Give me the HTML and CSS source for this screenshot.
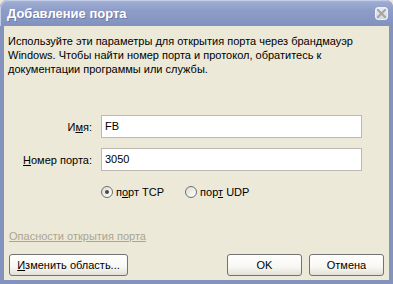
FILE: index.html
```html
<!DOCTYPE html>
<html lang="ru">
<head>
<meta charset="utf-8">
<title>Добавление порта</title>
<link rel="stylesheet" href="styles.css">
</head>
<body>
<div class="window">
  <div class="titlebar">
    <span class="title">Добавление порта</span>
    <span class="close" aria-label="Закрыть">
      <svg width="9" height="9" viewBox="0 0 9 9"><path d="M1 1 L8 8 M8 1 L1 8" stroke="#a7a49a" stroke-width="2" stroke-linecap="square"/></svg>
    </span>
  </div>
  <div class="client">
    <p class="intro">Используйте эти параметры для открытия порта через брандмауэр<br>Windows. Чтобы найти номер порта и протокол, обратитесь к<br>документации программы или службы.</p>
    <div class="form">
      <label class="lbl">И<u>м</u>я:</label>
      <div class="field">FB</div>
      <label class="lbl"><u>Н</u>омер порта:</label>
      <div class="field">3050</div>
    </div>
    <div class="radios">
      <span class="radio"><span class="dot on"></span><span>п<u>о</u>рт TCP</span></span>
      <span class="radio"><span class="dot"></span><span>пор<u>т</u> UDP</span></span>
    </div>
    <a class="link">Опасности открытия порта</a>
    <div class="buttons">
      <button class="btn wide"><u>И</u>зменить область...</button>
      <span class="spacer"></span>
      <button class="btn">OK</button>
      <button class="btn">Отмена</button>
    </div>
  </div>
</div>
</body>
</html>
```
FILE: styles.css
```css
html, body { margin: 0; padding: 0; background: #ece9d8; }
.window {
  width: 393px; height: 284px; box-sizing: border-box;
  display: flex; flex-direction: column;
  background: #8493bd;
  border-radius: 7px 7px 0 0;
  font-family: "Liberation Sans", Arial, sans-serif;
  font-size: 11px; color: #000;
  overflow: hidden;
}
.titlebar {
  height: 26px; flex: none; box-sizing: border-box;
  display: flex; align-items: center; justify-content: space-between;
  padding: 0 5px 0 7px;
  background: linear-gradient(#b4c0e0 0, #9eacd2 2px, #8e9dc7 40%, #8292bf 100%);
  border-radius: 7px 7px 0 0;
  box-shadow: inset 1px 1px 0 #c3cde8;
}
.title {
  color: #fff; font-weight: bold; font-size: 13px;
  text-shadow: 1px 1px 0 #6d7ba6;
  padding-top: 1px;
}
.close {
  width: 13px; height: 13px; box-sizing: border-box;
  display: flex; align-items: center; justify-content: center;
  border: 1px solid #eef0f6; border-radius: 3px;
  background: linear-gradient(#e9ebf2, #d3d7e4);
}
.client {
  flex: 1; background: #ece9d8;
  margin: 0 4px 4px 4px;
  display: flex; flex-direction: column;
}
.intro {
  margin: 8px 0 0 4px; line-height: 14px;
}
.form {
  margin-top: 39px;
  display: grid; grid-template-columns: 88px 261px;
  column-gap: 9px; row-gap: 10px;
  align-items: center;
}
.lbl { text-align: right; }
.field {
  height: 23px; box-sizing: border-box;
  border: 1px solid #bdb9ae; background: #fff;
  padding: 3px 0 0 3px; line-height: 14px;
}
.radios {
  margin: 15px 0 0 97px;
  display: flex; gap: 21px; align-items: center;
}
.radio { display: flex; align-items: center; gap: 3px; }
.dot {
  width: 12px; height: 12px; box-sizing: border-box;
  border: 1px solid #6e6e6e; border-radius: 50%;
  background: linear-gradient(135deg, #dcdcd4, #fff);
  display: flex; align-items: center; justify-content: center;
}
.dot.on::after {
  content: ""; width: 4px; height: 4px; border-radius: 50%;
  background: #4a4a4a;
}
.link {
  margin: 32px 0 0 5px; color: #aba590; text-decoration: underline;
  align-self: flex-start;
}
.buttons {
  margin: 12px 5px 0 5px;
  display: flex; gap: 7px;
}
.spacer { flex: 1; }
.btn {
  height: 22px; width: 75px; box-sizing: border-box;
  font-family: inherit; font-size: 11px; color: #000;
  border: 1px solid #727272; border-radius: 3px;
  background: linear-gradient(#fff 0, #f8f7f3 60%, #e2e0d6 100%);
  padding: 0;
}
.btn.wide { width: 119px; }
```
